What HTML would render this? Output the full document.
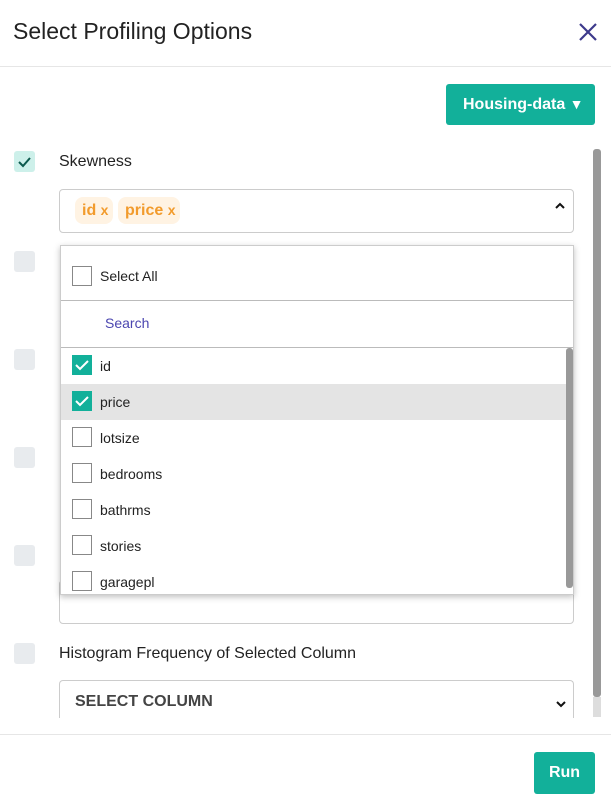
<!DOCTYPE html>
<html><head><style>
*{box-sizing:border-box;margin:0;padding:0}
body{width:611px;height:803px;background:#fff;font-family:"Liberation Sans",sans-serif;position:relative;overflow:hidden;color:#222}
.a{position:absolute}
.cb{position:absolute;width:21px;height:21px;background:#e8ebee;border-radius:3px;left:14px}
.sq{position:absolute;left:72px;width:20px;height:20px;border:1px solid #888;background:#fff}
.sq.on{background:#12b09a;border-color:#12b09a}
.lbl{position:absolute;left:100px;font-size:14px;color:#222}
</style></head><body>
<div class="a" style="left:13px;top:18px;font-size:23px;color:#222">Select Profiling Options</div>
<svg class="a" style="left:578px;top:22px" width="20" height="20" viewBox="0 0 20 20"><path d="M2 2L18 18M18 2L2 18" stroke="#3d3a8c" stroke-width="2.2"/></svg>
<div class="a" style="left:0;top:66px;width:611px;height:1px;background:#e6e6e6"></div>
<div class="a" style="left:446px;top:84px;width:149px;height:41px;background:#12b09a;border-radius:3px;color:#fff;font-weight:bold;font-size:16px;line-height:41px;padding-left:17px">Housing-data <span style="font-size:14px">▼</span></div>
<div class="a" style="left:593px;top:149px;width:8px;height:548px;background:#999;border-radius:3px"></div>
<div class="a" style="left:593px;top:697px;width:8px;height:20px;background:#ddd"></div>
<div class="cb" style="top:151px;background:#cdf0ea"><svg width="21" height="21"><path d="M5 11l4 4 7-8" stroke="#0c5a4e" stroke-width="2" fill="none"/></svg></div>
<div class="a" style="left:59px;top:153px;font-size:16px">Skewness</div>
<div class="a" style="left:59px;top:189px;width:515px;height:44px;border:1px solid #ccc;border-radius:4px"></div>
<div class="a" style="left:75px;top:197px;width:38px;height:27px;background:#fff3e3;border-radius:8px;color:#f29b2c;font-weight:bold;font-size:16px;line-height:27px;padding-left:7px">id <span style="font-size:14px">x</span></div>
<div class="a" style="left:118px;top:197px;width:62px;height:27px;background:#fff3e3;border-radius:8px;color:#f29b2c;font-weight:bold;font-size:16px;line-height:27px;padding-left:7px">price <span style="font-size:14px">x</span></div>
<svg class="a" style="left:554px;top:201px" width="12" height="10"><path d="M2 7l4-4 4 4" stroke="#111" stroke-width="2" fill="none"/></svg>
<div class="cb" style="top:251px"></div>
<div class="cb" style="top:349px"></div>
<div class="cb" style="top:447px"></div>
<div class="cb" style="top:545px"></div>
<div class="a" style="left:59px;top:580px;width:515px;height:44px;border:1px solid #ccc;border-radius:4px"></div>
<div class="a" style="left:60px;top:245px;width:514px;height:350px;background:#fff;border:1px solid #ccc;box-shadow:0 2px 6px rgba(0,0,0,.25)">
</div>
<div class="sq" style="top:266px"></div><div class="lbl" style="top:268px">Select All</div>
<div class="a" style="left:61px;top:300px;width:512px;height:1px;background:#bbb"></div>
<div class="a" style="left:105px;top:315px;font-size:14px;color:#4b46b0">Search</div>
<div class="a" style="left:61px;top:347px;width:512px;height:1px;background:#bbb"></div>
<div class="a" style="left:61px;top:384px;width:505px;height:36px;background:#e4e4e4"></div>
<div class="a" style="left:566px;top:348px;width:7px;height:240px;background:#999;border-radius:3px"></div>
<div class="sq on" style="top:355px"><svg width="18" height="18"><path d="M3 9l4 4 8-8" stroke="#fff" stroke-width="2" fill="none"/></svg></div><div class="lbl" style="top:358px">id</div>
<div class="sq on" style="top:391px"><svg width="18" height="18"><path d="M3 9l4 4 8-8" stroke="#fff" stroke-width="2" fill="none"/></svg></div><div class="lbl" style="top:394px">price</div>
<div class="sq" style="top:427px"></div><div class="lbl" style="top:430px">lotsize</div>
<div class="sq" style="top:463px"></div><div class="lbl" style="top:466px">bedrooms</div>
<div class="sq" style="top:499px"></div><div class="lbl" style="top:502px">bathrms</div>
<div class="sq" style="top:535px"></div><div class="lbl" style="top:538px">stories</div>
<div class="sq" style="top:571px"></div><div class="lbl" style="top:574px">garagepl</div>
<div class="cb" style="top:643px"></div>
<div class="a" style="left:59px;top:645px;font-size:16px">Histogram Frequency of Selected Column</div>
<div class="a" style="left:59px;top:680px;width:515px;height:38px;border:1px solid #ccc;border-bottom:none;border-radius:4px 4px 0 0"></div>
<div class="a" style="left:75px;top:693px;font-size:16px;font-weight:bold;color:#444">SELECT COLUMN</div>
<svg class="a" style="left:555px;top:699px" width="12" height="10"><path d="M2 3l4 4 4-4" stroke="#111" stroke-width="2" fill="none"/></svg>
<div class="a" style="left:0;top:734px;width:611px;height:1px;background:#e6e6e6"></div>
<div class="a" style="left:534px;top:752px;width:61px;height:42px;background:#12b09a;border-radius:3px;color:#fff;font-weight:bold;font-size:16px;line-height:42px;text-align:center">Run</div>
</body></html>
